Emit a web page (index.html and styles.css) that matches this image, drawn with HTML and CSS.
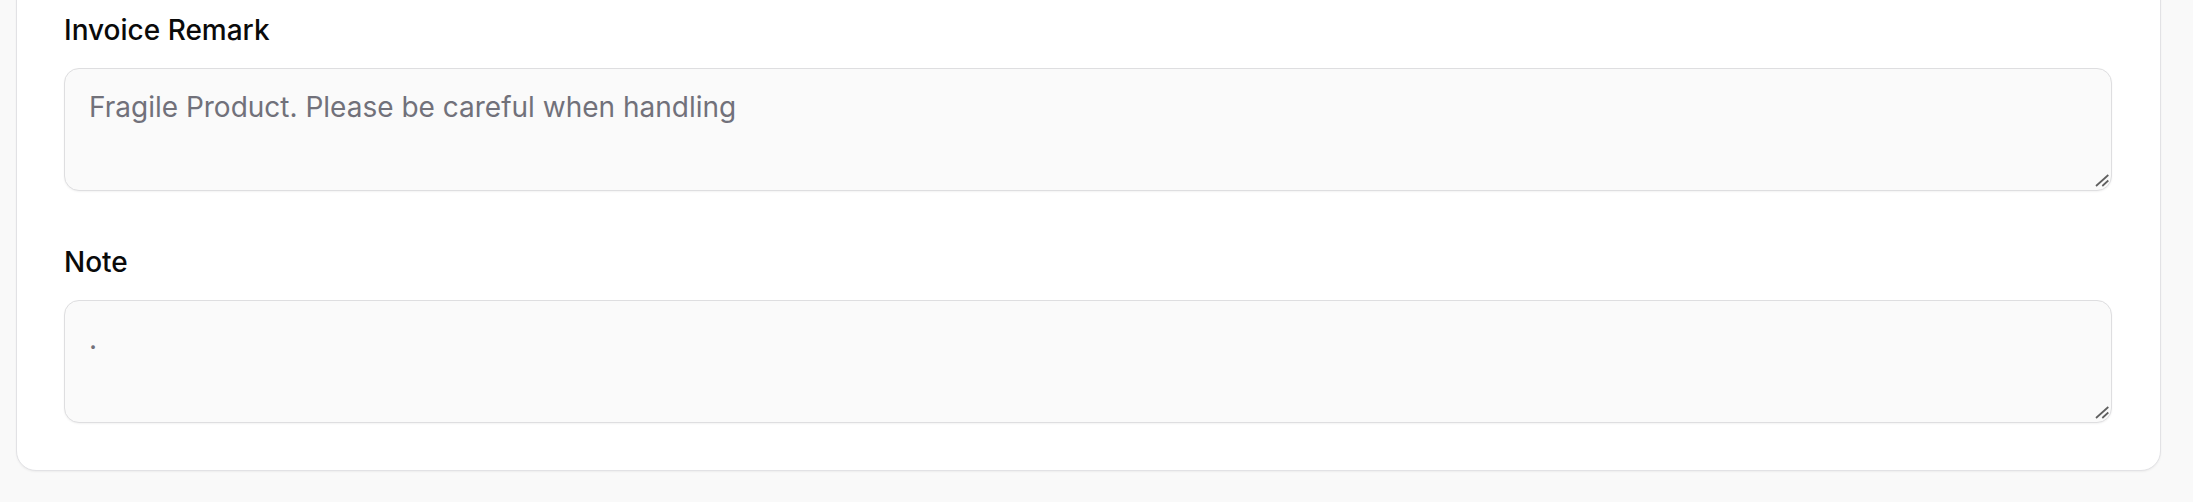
FILE: index.html
```html
<!DOCTYPE html>
<html lang="en">
<head>
<meta charset="utf-8">
<title>Invoice form</title>
<link rel="stylesheet" href="styles.css">
</head>
<body>
<div class="page">
  <section class="card">
    <div class="field">
      <label class="label" for="remark">Invoice Remark</label>
      <div class="input-wrap">
        <textarea id="remark" class="textarea" placeholder="Fragile Product. Please be careful when handling"></textarea>
        <svg class="grip" width="16" height="16" viewBox="0 0 16 16" aria-hidden="true">
          <line x1="2" y1="13" x2="14.3" y2="2"/>
          <line x1="8.3" y1="13" x2="14.3" y2="7.5"/>
        </svg>
      </div>
    </div>
    <div class="field">
      <label class="label" for="note">Note</label>
      <div class="input-wrap">
        <textarea id="note" class="textarea" placeholder="."></textarea>
        <svg class="grip" width="16" height="16" viewBox="0 0 16 16" aria-hidden="true">
          <line x1="2" y1="13" x2="14.3" y2="2"/>
          <line x1="8.3" y1="13" x2="14.3" y2="7.5"/>
        </svg>
      </div>
    </div>
  </section>
</div>
</body>
</html>
```
FILE: styles.css
```css
html, body {
  margin: 0;
  padding: 0;
  background: #f9f9f9;
  font-family: Inter, "Noto Sans", sans-serif;
}

.page {
  padding: 0 32px 0 16px;
  overflow: hidden;
  height: 502px;
}

.card {
  margin-top: -39px;
  background: #ffffff;
  border: 1px solid #e2e2e5;
  border-radius: 20px;
  box-shadow: 0 1px 2px rgba(0, 0, 0, 0.05);
  padding: 48px 48px 47px 47px;
  display: flex;
  flex-direction: column;
  gap: 51px;
}

.field {
  display: flex;
  flex-direction: column;
  gap: 18px;
}

.label {
  font-size: 28px;
  line-height: 40px;
  font-weight: 500;
  color: #0a0a0a;
}

.input-wrap {
  position: relative;
}

.textarea {
  display: block;
  box-sizing: border-box;
  width: 100%;
  height: 123px;
  margin: 0;
  padding: 18px 24px 12px;
  border: 1.5px solid #dedee0;
  border-radius: 15px;
  background: #fafafa;
  box-shadow: 0 1px 2px rgba(0, 0, 0, 0.05);
  font-family: Inter, "Noto Sans", sans-serif;
  font-size: 28px;
  line-height: 40px;
  color: #0a0a0a;
  resize: none;
  outline: none;
}

.textarea::placeholder {
  color: #71717a;
  opacity: 1;
}

.grip {
  position: absolute;
  right: 2px;
  bottom: 2px;
  stroke: #5f5f5f;
  stroke-width: 1.7;
  fill: none;
  pointer-events: none;
}
```
